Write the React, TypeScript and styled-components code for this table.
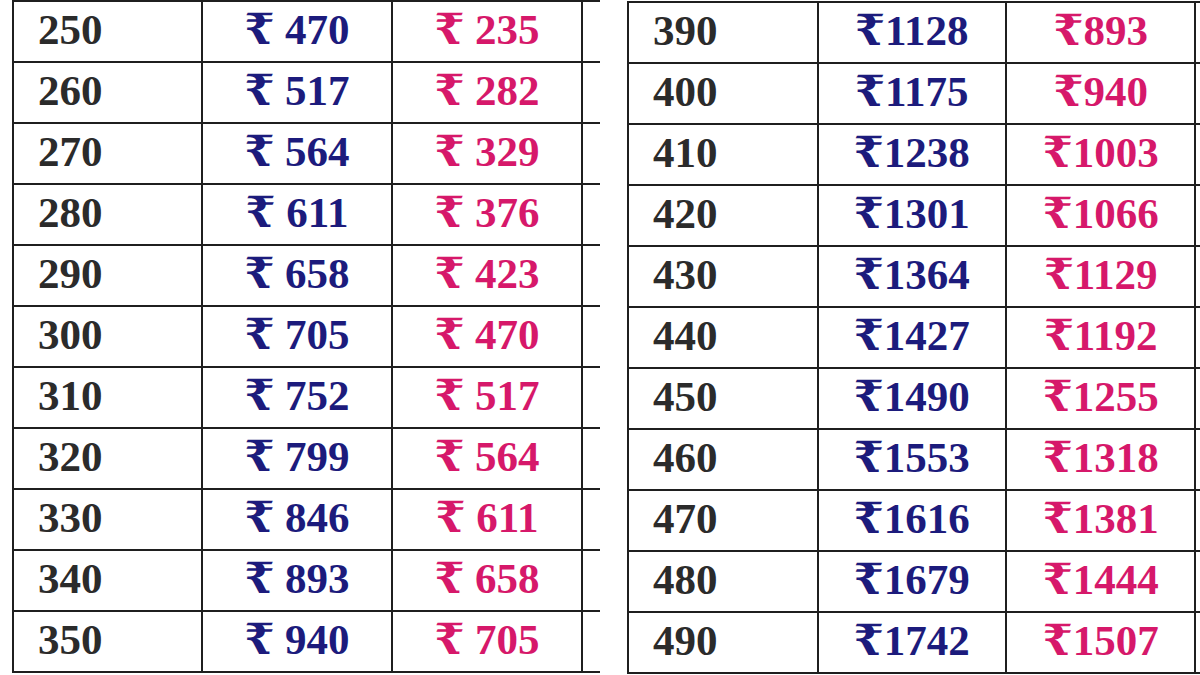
import React from "react";
import styled, { createGlobalStyle } from "styled-components";

const GlobalStyle = createGlobalStyle`
  html, body { margin: 0; padding: 0; background: #ffffff; }
  body { width: 1200px; height: 675px; overflow: hidden; }
`;

const Page = styled.div`
  display: flex;
  width: 1200px;
  height: 675px;
  background: #ffffff;
  overflow: hidden;
`;

const Clip = styled.div<{ $width: number; $padLeft: number; $padTop: number }>`
  width: ${(p) => p.$width}px;
  flex: none;
  overflow: hidden;
  padding-left: ${(p) => p.$padLeft}px;
  padding-top: ${(p) => p.$padTop}px;
  box-sizing: border-box;
`;

const Gap = styled.div<{ $width: number }>`
  width: ${(p) => p.$width}px;
  flex: none;
`;

const Table = styled.table`
  border-collapse: collapse;
  table-layout: fixed;
  width: 760px;
  font-family: "Liberation Serif", "DejaVu Serif", "Noto Sans", serif;
  font-weight: 700;
  font-size: 43px;
`;

const Row = styled.tr`
  height: 61px;
`;

type Tone = "plain" | "blue" | "pink";

const toneColor: Record<Tone, string> = {
  plain: "#2b2b2b",
  blue: "#1c1b7c",
  pink: "#d6186a",
};

const Cell = styled.td<{ $tone: Tone }>`
  border: 2px solid #1f1f1f;
  padding: 0 0 5px 0;
  padding-left: ${(p) => (p.$tone === "plain" ? "24px" : "0")};
  text-align: ${(p) => (p.$tone === "plain" ? "left" : "center")};
  color: ${(p) => toneColor[p.$tone]};
  line-height: 1;
  white-space: nowrap;
  vertical-align: middle;
`;

type Entry = [number, number, number];

const left: Entry[] = [
  [250, 470, 235],
  [260, 517, 282],
  [270, 564, 329],
  [280, 611, 376],
  [290, 658, 423],
  [300, 705, 470],
  [310, 752, 517],
  [320, 799, 564],
  [330, 846, 611],
  [340, 893, 658],
  [350, 940, 705],
];

const right: Entry[] = [
  [390, 1128, 893],
  [400, 1175, 940],
  [410, 1238, 1003],
  [420, 1301, 1066],
  [430, 1364, 1129],
  [440, 1427, 1192],
  [450, 1490, 1255],
  [460, 1553, 1318],
  [470, 1616, 1381],
  [480, 1679, 1444],
  [490, 1742, 1507],
];

function PriceTable({ rows, spaced, widths }: { rows: Entry[]; spaced: boolean; widths: number[] }) {
  const sep = spaced ? "\u20B9 " : "\u20B9";
  return (
    <Table>
      <colgroup>
        {widths.map((w, i) => (
          <col key={i} style={{ width: w }} />
        ))}
      </colgroup>
      <tbody>
        {rows.map(([a, b, c]) => (
          <Row key={a}>
            <Cell $tone="plain">{a}</Cell>
            <Cell $tone="blue">{sep + b}</Cell>
            <Cell $tone="pink">{sep + c}</Cell>
            <Cell $tone="plain"></Cell>
          </Row>
        ))}
      </tbody>
    </Table>
  );
}

export default function App() {
  return (
    <>
      <GlobalStyle />
      <Page>
        <Clip $width={600} $padLeft={12} $padTop={0}>
          <PriceTable rows={left} spaced widths={[189, 190, 190, 190]} />
        </Clip>
        <Gap $width={26} />
        <Clip $width={574} $padLeft={1} $padTop={1}>
          <PriceTable rows={right} spaced={false} widths={[189, 188, 189, 190]} />
        </Clip>
      </Page>
    </>
  );
}
